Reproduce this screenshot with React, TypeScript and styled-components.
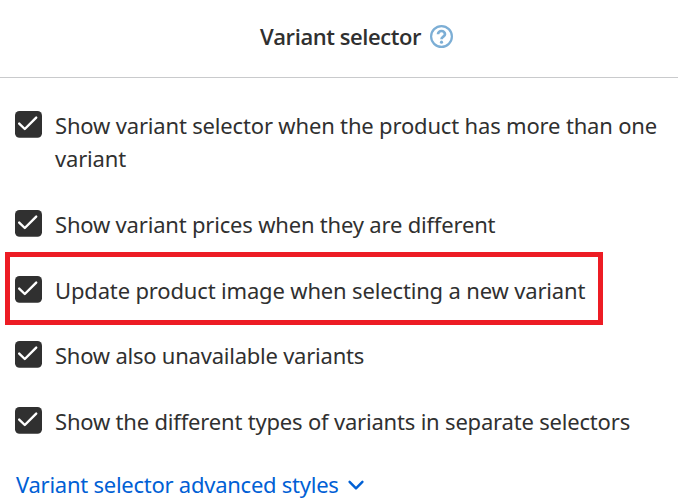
import React from 'react';
import styled, { createGlobalStyle } from 'styled-components';

const GlobalStyle = createGlobalStyle`
  * { box-sizing: border-box; }
  body { margin: 0; background: #fff; color: #303030; font-family: "Noto Sans", sans-serif; overflow: hidden; }
`;
const Panel = styled.main`width: 678px; height: 502px; overflow: hidden; background: #fff;`;
const Header = styled.header`
  height: 78px; border-bottom: 1px solid #c9cacc; display: flex; align-items: flex-start;
  padding: 20px 0 0 260px;
`;
const Title = styled.h1`
  margin: 0; width: 170px; font-family: "Open Sans", sans-serif; font-size: 22px; line-height: 33px;
  font-weight: 600; letter-spacing: -0.43px; white-space: nowrap;
`;
const HelpIcon = styled.svg`width: 23px; height: 23px; margin-top: 5px; flex: none;`;
const Options = styled.div`display: flex; flex-direction: column; padding: 31px 0 0 15px;`;
const Option = styled.label<{ $height: number }>`
  display: flex; gap: 13px; height: ${p => p.$height}px; align-items: flex-start;
`;
const Box = styled.svg`width: 27px; height: 27px; margin-top: 2px; flex: none;`;
const Text = styled.span<{ $spacing: number }>`
  font-size: 22px; line-height: 33px; letter-spacing: ${p => p.$spacing}px; white-space: nowrap;
`;
const Link = styled.a`
  display: flex; align-items: flex-start; padding-left: 16px; height: 33px; color: #0060d5;
`;
const LinkText = styled(Text)`width: 332px;`;
const Chevron = styled.svg`width: 17px; height: 11px; margin-top: 12px;`;
const Highlight = styled.div`
  position: absolute; left: 5px; top: 252px; width: 598px; height: 73px; border: 5px solid #ed1c24;
`;

const options = [
  { lines: ['Show variant selector when the product has more than one', 'variant'], height: 99, spacing: -0.17 },
  { lines: ['Show variant prices when they are different'], height: 66, spacing: -0.19 },
  { lines: ['Update product image when selecting a new variant'], height: 65, spacing: -0.16 },
  { lines: ['Show also unavailable variants'], height: 66, spacing: -0.23 },
  { lines: ['Show the different types of variants in separate selectors'], height: 63, spacing: -0.19 },
];

export default function App() {
  return (
    <Panel>
      <GlobalStyle />
      <Header>
        <Title>Variant selector</Title>
        <HelpIcon viewBox="0 0 23 23" fill="none" stroke="#7caed5" strokeWidth="2.7">
          <circle cx="11.5" cy="11.5" r="10.4" strokeWidth="2.2" />
          <path d="M8 9.3a3.5 3.3 0 0 1 7 0c0 2.3-3.5 2.3-3.5 4.9" />
          <circle cx="11.5" cy="17.2" r="1.6" fill="#7caed5" stroke="none" />
        </HelpIcon>
      </Header>
      <Options>
        {options.map(o => (
          <Option key={o.lines[0]} $height={o.height}>
            <Box viewBox="0 0 27 27">
              <rect width="27" height="26.7" rx="4.5" fill="#303030" />
              <path d="M4.2 12.6l5.6 5.4L21.2 6.6" fill="none" stroke="#fff" strokeWidth="2.4" strokeLinecap="round" strokeLinejoin="round" />
            </Box>
            <Text $spacing={o.spacing}>{o.lines.map(l => <div key={l}>{l}</div>)}</Text>
          </Option>
        ))}
      </Options>
      <Link>
        <LinkText $spacing={-0.25}>Variant selector advanced styles</LinkText>
        <Chevron viewBox="0 0 17 11" fill="none" stroke="#0060d5" strokeWidth="2.4" strokeLinecap="round" strokeLinejoin="round">
          <path d="M1.6 1.8l6.4 6.6 6.4-6.6" />
        </Chevron>
      </Link>
      <Highlight />
    </Panel>
  );
}
